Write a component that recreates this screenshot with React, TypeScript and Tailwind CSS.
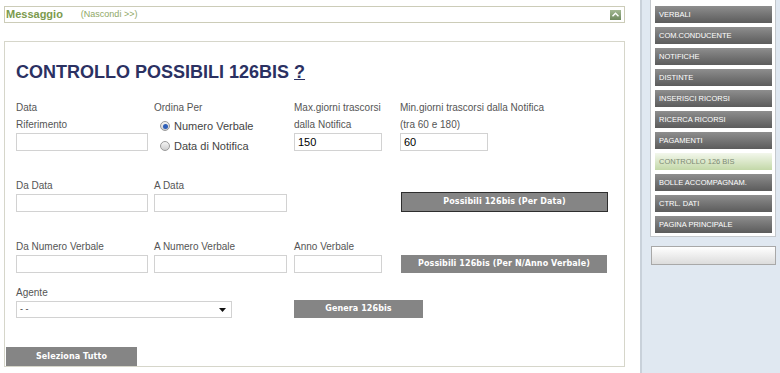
import React from "react";

const menu = [
  "VERBALI",
  "COM.CONDUCENTE",
  "NOTIFICHE",
  "DISTINTE",
  "INSERISCI RICORSI",
  "RICERCA RICORSI",
  "PAGAMENTI",
  "CONTROLLO 126 BIS",
  "BOLLE ACCOMPAGNAM.",
  "CTRL. DATI",
  "PAGINA PRINCIPALE",
];

const Label = ({ children }: { children: React.ReactNode }) => (
  <div className="text-[10px] leading-[17px] text-[#555] whitespace-nowrap">{children}</div>
);

const Field = ({ w, value }: { w: string; value?: string }) => (
  <input
    readOnly
    defaultValue={value}
    className={`${w} block h-[18px] border border-[#d2d2d2] bg-white px-[3px] text-[11px] text-black outline-none font-['Liberation_Sans',sans-serif]`}
  />
);

const Radio = ({ checked, label }: { checked?: boolean; label: string }) => (
  <div className="flex h-[20px] items-center pl-[6px] text-[11px] text-[#444]">
    <span className="mr-[4px] flex h-[10px] w-[10px] items-center justify-center rounded-full border border-[#9a9a9a] bg-linear-to-b from-[#f4f4f4] to-[#cfcfcf]">
      {checked && <span className="h-[5px] w-[5px] rounded-full bg-[#2f5fb8]" />}
    </span>
    {label}
  </div>
);

const GrayButton = ({
  children,
  className,
}: {
  children: React.ReactNode;
  className: string;
}) => (
  <button
    className={`${className} bg-[#858585] text-[8px] font-bold text-white font-['DejaVu_Sans',Verdana,sans-serif] tracking-[0.1px]`}
  >
    {children}
  </button>
);

export default function App() {
  return (
    <div className="flex h-[373px] w-[780px] overflow-hidden bg-white font-['Liberation_Sans',Arial,sans-serif]">
      {/* main */}
      <div className="w-[640px] pl-[4px] pt-[6px]">
        <div className="flex h-[17px] w-[621px] items-center border border-[#ccccb8] pl-[1px] pr-[3px]">
          <span className="text-[11px] font-bold text-[#7b9a4d]">Messaggio</span>
          <span className="ml-[18px] text-[9px] text-[#8fa866]">(Nascondi &gt;&gt;)</span>
          <span className="ml-auto flex h-[10px] w-[11px] items-center justify-center bg-linear-to-b from-[#a3b893] to-[#6f8a5e]">
            <svg width="7" height="5" viewBox="0 0 7 5">
              <path d="M0.5 4.2 L3.5 1.2 L6.5 4.2" stroke="white" strokeWidth="1.4" fill="none" />
            </svg>
          </span>
        </div>

        <div className="mt-[18px] flex h-[326px] w-[621px] flex-col border border-[#d6d6ca]">
          <div className="pl-[11px] pt-[20px]">
            <div className="text-[18px] font-bold leading-[21px] text-[#2b3162]">
              CONTROLLO POSSIBILI 126BIS <span className="underline">?</span>
            </div>

            {/* row 1 */}
            <div className="mt-[16px] flex h-[53px] items-start">
              <div className="w-[138px]">
                <Label>Data</Label>
                <Label>Riferimento</Label>
                <Field w="w-[132px]" />
              </div>
              <div className="w-[140px]">
                <Label>Ordina Per</Label>
                <Radio checked label="Numero Verbale" />
                <Radio label="Data di Notifica" />
              </div>
              <div className="w-[106px]">
                <Label>Max.giorni trascorsi</Label>
                <Label>dalla Notifica</Label>
                <Field w="w-[88px]" value="150" />
              </div>
              <div>
                <Label>Min.giorni trascorsi dalla Notifica</Label>
                <Label>(tra 60 e 180)</Label>
                <Field w="w-[88px]" value="60" />
              </div>
            </div>

            {/* row 2 */}
            <div className="mt-[25px] flex h-[35px] items-start">
              <div className="w-[138px]">
                <Label>Da Data</Label>
                <Field w="w-[132px]" />
              </div>
              <div className="w-[246px]">
                <Label>A Data</Label>
                <Field w="w-[133px]" />
              </div>
              <GrayButton className="ml-[1px] mt-[15px] h-[20px] w-[207px] border border-[#2e2e2e]">
                Possibili 126bis (Per Data)
              </GrayButton>
            </div>

            {/* row 3 */}
            <div className="mt-[26px] flex h-[35px] items-start">
              <div className="w-[138px]">
                <Label>Da Numero Verbale</Label>
                <Field w="w-[132px]" />
              </div>
              <div className="w-[140px]">
                <Label>A Numero Verbale</Label>
                <Field w="w-[133px]" />
              </div>
              <div className="w-[106px]">
                <Label>Anno Verbale</Label>
                <Field w="w-[88px]" />
              </div>
              <GrayButton className="ml-[1px] mt-[17px] h-[18px] w-[206px]">
                Possibili 126bis (Per N/Anno Verbale)
              </GrayButton>
            </div>

            {/* agente */}
            <div className="mt-[11px] flex items-start">
              <div className="w-[278px]">
                <Label>Agente</Label>
                <div className="flex h-[17px] w-[216px] items-center justify-between border border-[#d2d2d2] bg-white pl-[3px] pr-[5px] text-[9px] text-[#333]">
                  <span>- -</span>
                  <svg width="7" height="4" viewBox="0 0 7 4">
                    <path d="M0 0 H7 L3.5 4 Z" fill="#111" />
                  </svg>
                </div>
              </div>
              <GrayButton className="mt-[16px] h-[18px] w-[129px]">Genera 126bis</GrayButton>
            </div>
          </div>

          <GrayButton className="mb-0 ml-[1px] mt-auto h-[19px] w-[131px]">Seleziona Tutto</GrayButton>
        </div>
      </div>

      {/* sidebar */}
      <div className="h-[373px] w-[140px] border-l-[2px] border-[#c9d1da] bg-[#e0e8f1] pl-[8px]">
        <div className="w-[126px] border border-t-0 border-[#c4c8cc] bg-white pb-[3px] pl-[4px] pr-[3px] pt-[6px]">
          <div className="flex flex-col gap-[4px]">
            {menu.map((m) =>
              m === "CONTROLLO 126 BIS" ? (
                <div
                  key={m}
                  className="flex h-[17px] items-center bg-linear-to-b from-[#f3f7ec] to-[#c3d8a8] pl-[4px] text-[7.5px] text-[#7d8a74]"
                >
                  {m}
                </div>
              ) : (
                <div
                  key={m}
                  className="flex h-[17px] items-center bg-linear-to-b from-[#8e8e8e] to-[#5c5c5c] pl-[4px] text-[7.5px] text-white"
                >
                  {m}
                </div>
              )
            )}
          </div>
        </div>
        <div className="ml-[1px] mt-[9px] h-[19px] w-[125px] border border-[#a8a8a8] bg-linear-to-b from-white to-[#dcdcdc]" />
      </div>
    </div>
  );
}
